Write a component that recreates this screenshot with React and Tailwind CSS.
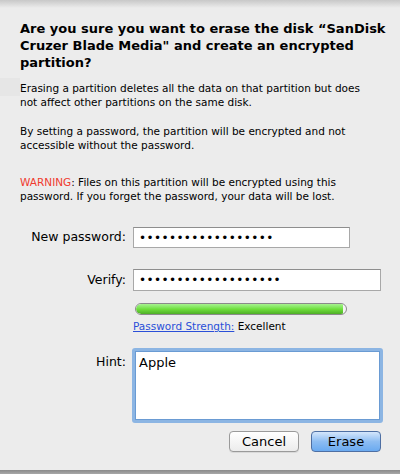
import React from "react";

const font = { fontFamily: '"DejaVu Sans", "Liberation Sans", sans-serif' };

export default function App() {
  return (
    <div
      className="relative w-[400px] h-[474px] overflow-hidden bg-[#ececec] text-black"
      style={font}
    >
      <div className="absolute left-0 top-[78px] w-[20px] h-[18px] bg-[#e6e6e6]" />
      <div className="absolute inset-x-0 top-0 h-[8px] bg-gradient-to-b from-[#c8c8c8] to-[#ececec]" />
      <div className="relative flex flex-col pl-[20px] pt-[20px]">
        <div className="text-[13px] font-bold leading-[17px]">
          Are you sure you want to erase the disk “SanDisk
          <br />
          Cruzer Blade Media" and create an encrypted
          <br />
          partition?
        </div>
        <div className="mt-[10px] text-[10.5px] leading-[14px]">
          Erasing a partition deletes all the data on that partition but does
          <br />
          not affect other partitions on the same disk.
        </div>
        <div className="mt-[15px] text-[10.5px] leading-[14px]">
          By setting a password, the partition will be encrypted and not
          <br />
          accessible without the password.
        </div>
        <div className="mt-[23px] text-[10.5px] leading-[14px]">
          <span className="text-[#f03a2e]">WARNING</span>: Files on this partition will be encrypted using this
          <br />
          password. If you forget the password, your data will be lost.
        </div>
      </div>

      <div className="relative flex flex-col mt-[24px]">
        <div className="flex items-center">
          <div className="w-[126px] text-right text-[12.5px]">New password:</div>
          <div className="ml-[7px] w-[217px] h-[21px] bg-white border border-[#a8a8a8] border-t-[#8e8e8e] flex items-center pl-[5px] text-[12px] tracking-[0.4px]">
            ••••••••••••••••••
          </div>
        </div>
        <div className="flex items-center mt-[21px]">
          <div className="w-[126px] text-right text-[12.5px]">Verify:</div>
          <div className="ml-[7px] w-[248px] h-[22px] bg-white border border-[#a8a8a8] border-t-[#8e8e8e] flex items-center pl-[5px] text-[12px] tracking-[0.4px]">
            •••••••••••••••••••
          </div>
        </div>
        <div className="ml-[135px] mt-[12px] w-[212px] h-[12px] rounded-full border border-[#8a8a8a] bg-[#f4f4f4] overflow-hidden flex">
          <div className="h-full w-[207px] rounded-l-full bg-gradient-to-b from-[#a6f28e] via-[#6fe03c] to-[#4fae27]" />
        </div>
        <div className="ml-[133px] mt-[4px] text-[10.5px] leading-[14px]">
          <span className="text-[#2a4fd8] underline">Password Strength:</span> Excellent
        </div>
        <div className="flex mt-[15px]">
          <div className="w-[126px] pt-[5px] text-right text-[12.5px]">Hint:</div>
          <div className="ml-[6px] w-[251px] h-[75px] rounded-[3px] border-[3px] border-[#8cb5e3] bg-white">
            <div className="w-full h-full border border-[#6a9bd3] px-[3px] pt-[2px] text-[13px] leading-[17px]">
              Apple
            </div>
          </div>
        </div>
        <div className="flex justify-end gap-[12px] pr-[19px] mt-[8px]">
          <button className="w-[70px] h-[21px] rounded-[4px] border border-[#9a9a9a] bg-gradient-to-b from-[#ffffff] to-[#ececec] text-[13px] leading-[19px] shadow-[0_1px_0_rgba(0,0,0,0.08)]">
            Cancel
          </button>
          <button className="w-[70px] h-[21px] rounded-[4px] border border-[#4e6fa3] bg-gradient-to-b from-[#d4e6fb] via-[#8dbdf2] to-[#6aaaf0] text-[13px] leading-[19px]">
            Erase
          </button>
        </div>
      </div>

      <div className="absolute inset-x-0 bottom-0 h-[4px] bg-gradient-to-b from-[#8a8a8a] to-[#a8a8a8]" />
    </div>
  );
}
